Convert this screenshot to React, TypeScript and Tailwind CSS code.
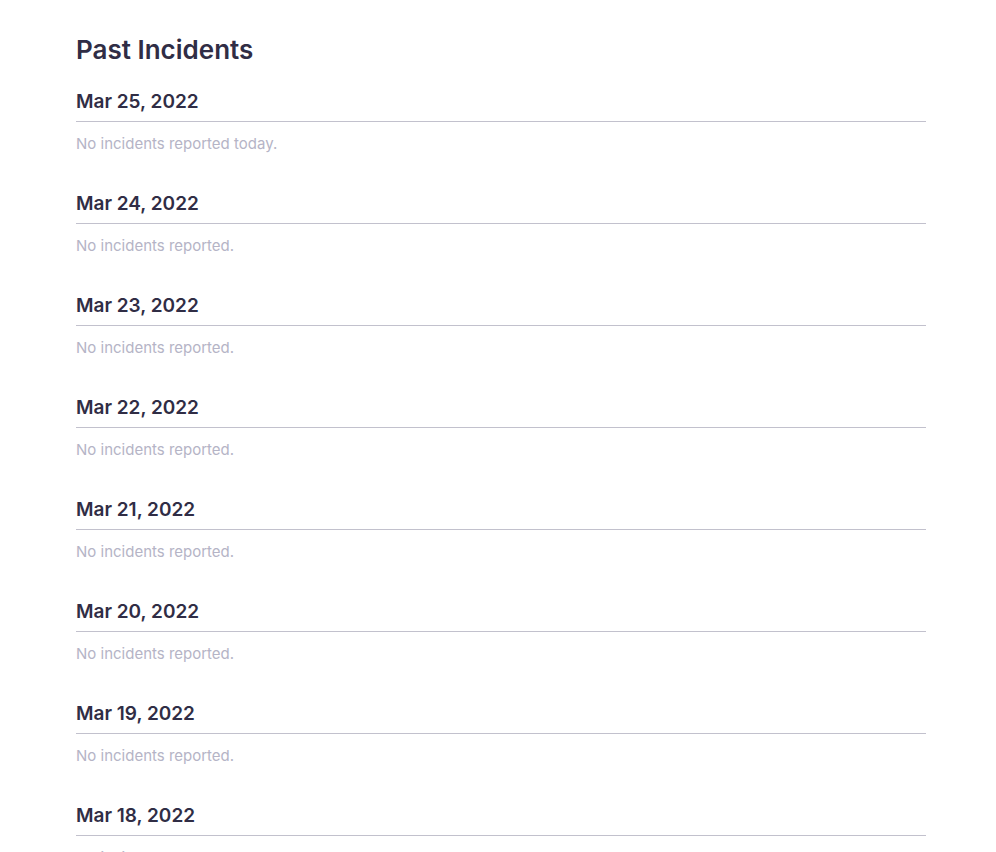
const days = [
  { date: 'Mar 25, 2022', note: 'No incidents reported today.' },
  { date: 'Mar 24, 2022', note: 'No incidents reported.' },
  { date: 'Mar 23, 2022', note: 'No incidents reported.' },
  { date: 'Mar 22, 2022', note: 'No incidents reported.' },
  { date: 'Mar 21, 2022', note: 'No incidents reported.' },
  { date: 'Mar 20, 2022', note: 'No incidents reported.' },
  { date: 'Mar 19, 2022', note: 'No incidents reported.' },
  { date: 'Mar 18, 2022', note: 'No incidents reported.' },
];

export default function App() {
  return (
    <div className="min-h-screen bg-white font-['Inter','Lato',sans-serif]">
      <div className="mx-[76px] w-[850px] pt-[34px]">
        <h2 className="text-[26px] leading-[32px] font-semibold text-[#302d45]">Past Incidents</h2>
        <div className="mt-[23px]">
          {days.map((d) => (
            <div key={d.date} className="mb-[37px]">
              <h3 className="text-[19px] leading-[24px] font-semibold text-[#302d45] pt-[1px] pb-[7px] border-b border-[#c2c1cd]">
                {d.date}
              </h3>
              <p className="mt-[12px] text-[15px] leading-[20px] text-[#b5b4c6]">{d.note}</p>
            </div>
          ))}
        </div>
      </div>
    </div>
  );
}
